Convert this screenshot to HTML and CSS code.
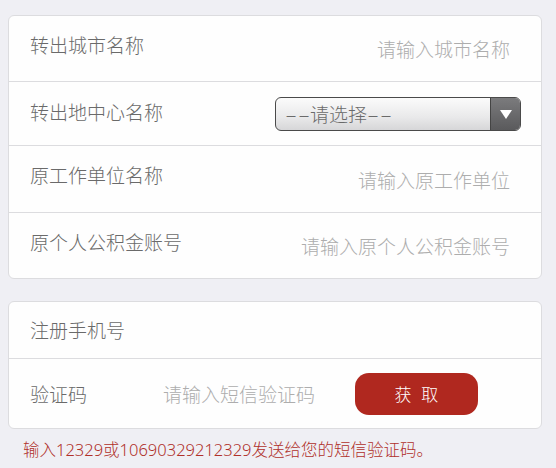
FILE: index.html
```html
<!DOCTYPE html>
<html lang="zh-CN">
<head>
<meta charset="utf-8">
<title>转出信息</title>
<link rel="stylesheet" href="styles.css">
</head>
<body>
<div class="page">
  <div class="card">
    <div class="row r1">
      <span class="label">转出城市名称</span>
      <input class="field" type="text" placeholder="请输入城市名称">
    </div>
    <div class="row r2">
      <span class="label">转出地中心名称</span>
      <div class="select">
        <span class="select-text"><span class="dash">-</span><span class="dash">-</span>请选择<span class="dash">-</span><span class="dash">-</span></span>
        <span class="select-arrow">
          <svg width="12" height="9" viewBox="0 0 12 9"><polygon points="0,0 12,0 6,9" fill="#fff"/></svg>
        </span>
      </div>
    </div>
    <div class="row r3">
      <span class="label">原工作单位名称</span>
      <input class="field" type="text" placeholder="请输入原工作单位">
    </div>
    <div class="row r4">
      <span class="label">原个人公积金账号</span>
      <input class="field" type="text" placeholder="请输入原个人公积金账号">
    </div>
  </div>

  <div class="card card2">
    <div class="row p1">
      <span class="label">注册手机号</span>
    </div>
    <div class="row p2">
      <span class="label code-label">验证码</span>
      <input class="field code-field" type="text" placeholder="请输入短信验证码">
      <button class="btn" type="button">获 取</button>
    </div>
  </div>

  <p class="note">输入12329或10690329212329发送给您的短信验证码。</p>
</div>
</body>
</html>
```

FILE: styles.css
```css
html, body {
  margin: 0;
  padding: 0;
  background: #efeff4;
}
body {
  font-family: "Noto Sans CJK SC", "Noto Sans", sans-serif;
  font-weight: 300;
  color: #666;
}
.page {
  padding: 15px 14px 0 8px;
}
.card {
  background: #fefefe;
  border: 1px solid #dcdcdf;
  border-radius: 6px;
  width: 532px;
}
.card2 {
  margin-top: 22px;
}
.row {
  display: flex;
  align-items: center;
  padding: 0 20px 0 21px;
  border-bottom: 1px solid #dcdcdf;
  box-sizing: border-box;
}
.row:last-child {
  border-bottom: none;
}
.r1 { height: 66px; }
.r2 { height: 64px; }
.r3 { height: 67px; }
.r4 { height: 65px; }
.p1 { height: 57px; }
.p2 { height: 69px; }

.label {
  font-size: 19px;
  line-height: 26px;
  color: #6a6a6a;
  white-space: nowrap;
}
.card:first-child .label {
  margin-bottom: 8px;
}
.card:first-child .r2 .label {
  margin-bottom: 4px;
}
.field {
  flex: 1;
  min-width: 0;
  border: none;
  outline: none;
  background: transparent;
  font-family: inherit;
  font-weight: 300;
  font-size: 19px;
  color: #666;
  text-align: right;
  padding: 0 11px 0 0;
  height: 30px;
}
.field::placeholder {
  color: #adadad;
}
.select {
  margin-left: auto;
  width: 246px;
  height: 34px;
  box-sizing: border-box;
  border: 1px solid #4a4a4a;
  border-radius: 6px;
  background: linear-gradient(#fbfbfb, #e9e9ea 60%, #d6d6d8);
  display: flex;
  align-items: center;
  overflow: hidden;
  margin-top: 1px;
}
.select-text {
  flex: 1;
  font-size: 19px;
  color: #6a6a6a;
  padding-left: 9px;
  line-height: 26px;
  white-space: nowrap;
}
.dash {
  display: inline-block;
  width: 12.5px;
  transform: scaleX(1.9);
  transform-origin: left center;
}
.select-arrow {
  width: 29px;
  height: 100%;
  background: linear-gradient(#7b7b7d, #5a5a5c);
  display: flex;
  align-items: center;
  justify-content: center;
  border-left: 1px solid #444;
}
.code-label {
  width: 133px;
}
.code-field {
  flex: 0 0 180px;
  text-align: left;
  padding: 0;
}
.btn {
  margin-left: 12px;
  width: 123px;
  height: 42px;
  border: none;
  border-radius: 14px;
  background: #b0281f;
  color: #fff;
  font-family: inherit;
  font-weight: 300;
  font-size: 17px;
  letter-spacing: 3px;
  text-indent: 3px;
  padding: 0;
}
.note {
  margin: 9px 0 0 15px;
  font-family: "Noto Sans", "Noto Sans CJK SC", sans-serif;
  font-weight: 300;
  font-size: 16.5px;
  line-height: 24px;
  color: #b0302a;
  white-space: nowrap;
}
```
